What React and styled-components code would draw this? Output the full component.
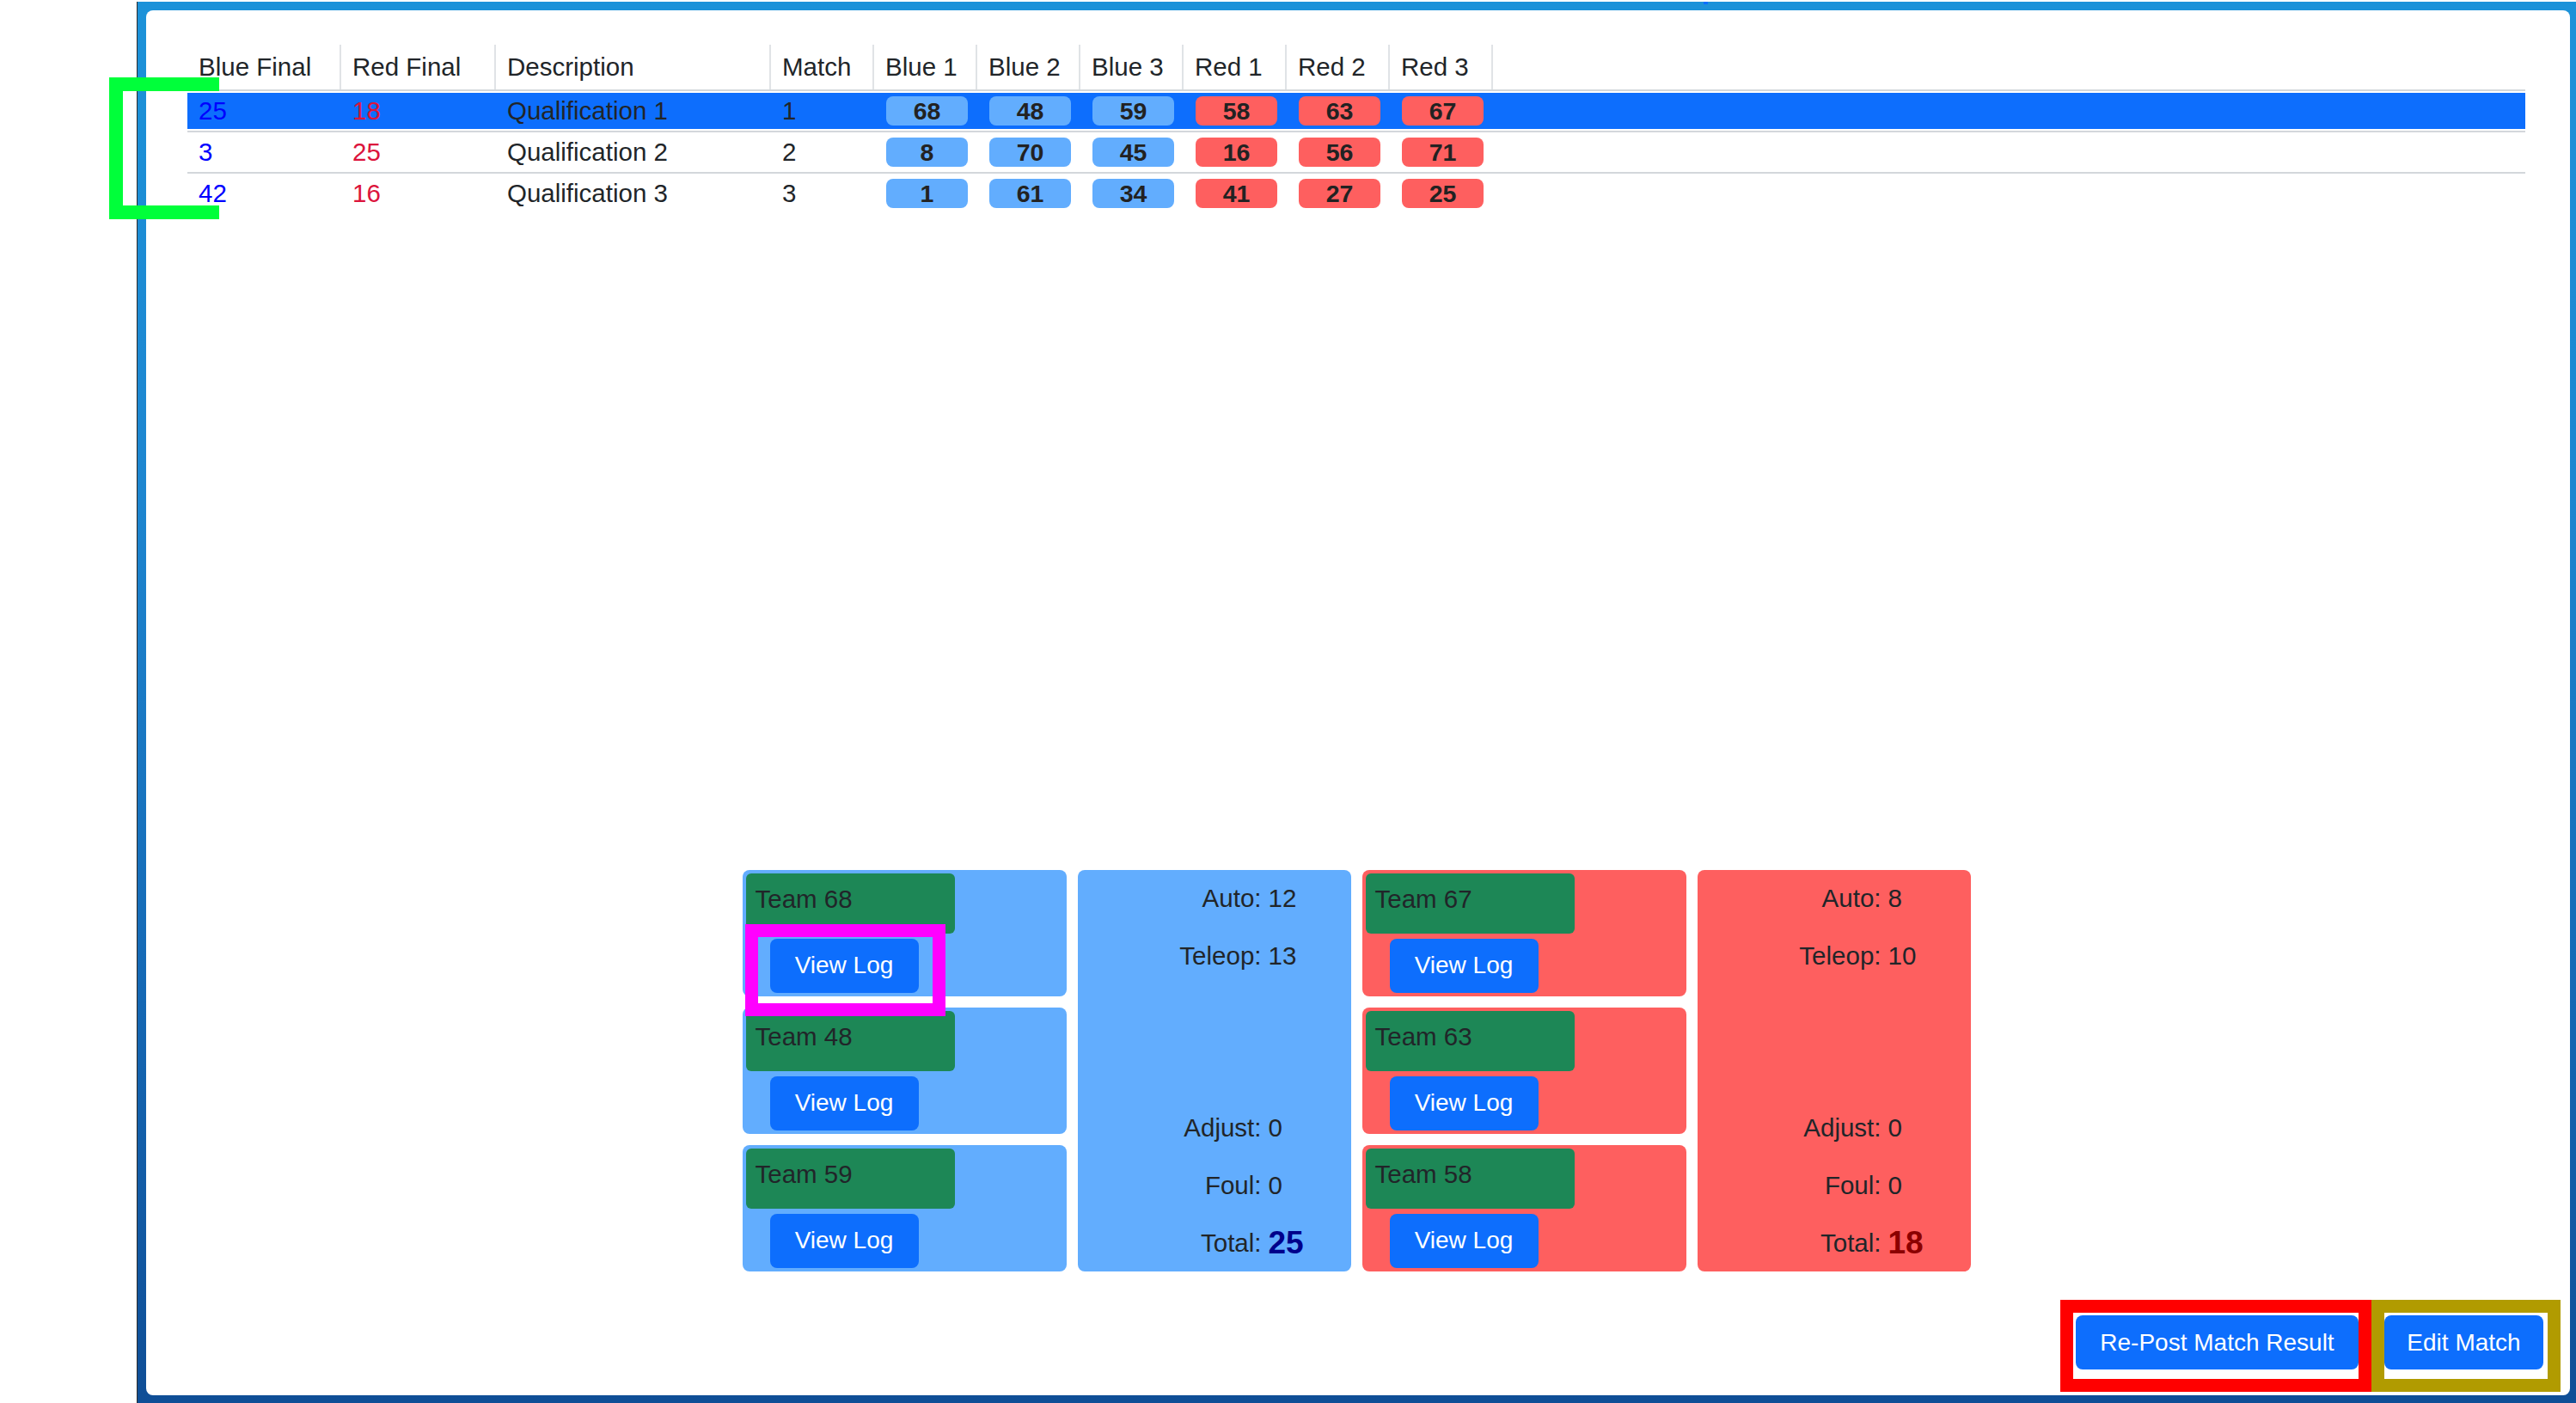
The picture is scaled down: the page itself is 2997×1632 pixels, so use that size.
import React from "react";
import styled, { createGlobalStyle } from "styled-components";

const blueSoft = "#62adfe";
const redSoft = "#fe5f5f";
const primary = "#0d6efd";
const ink = "#212529";
const line = "#d3d7db";

const GlobalStyle = createGlobalStyle`
  html, body {
    margin: 0;
    padding: 0;
    background: #fff;
  }
  body {
    font-family: "Liberation Sans", Arial, sans-serif;
    color: ${ink};
    overflow: hidden;
  }
`;

const Page = styled.div`
  position: relative;
  width: 2997px;
  height: 1632px;
`;

const Frame = styled.div`
  box-sizing: border-box;
  margin: 2px 0 0 159px;
  height: 1630px;
  border-left: 1px solid #2b2b2b;
  padding: 10px 7px 9px 10px;
  background: linear-gradient(180deg, #1c92d9 0%, #1d86d0 35%, #1569b5 70%, #0f4e96 100%);
`;

const Panel = styled.div`
  box-sizing: border-box;
  height: 100%;
  background: #fff;
  border-radius: 8px;
  padding: 40px 52px 30px 48px;
  display: flex;
  flex-direction: column;
`;

const cols = "179px 180px 320px 120px repeat(6, 120px) 1fr";

const HeadRow = styled.div`
  display: grid;
  grid-template-columns: ${cols};
  height: 52px;
  border-bottom: 2px solid ${line};
`;

const HeadCell = styled.div`
  display: flex;
  align-items: center;
  padding-left: 13px;
  font-size: 29.5px;
  border-right: ${({ last }) => (last ? "none" : "2px solid #e0e3e6")};
`;

const Row = styled.div`
  display: grid;
  grid-template-columns: ${cols};
  height: 46px;
  border-bottom: ${({ last }) => (last ? "none" : `2px solid ${line}`)};
  background: ${({ active }) => (active ? primary : "transparent")};
  box-shadow: ${({ active }) =>
    active ? "inset 0 2px 0 #fff, inset 0 -2px 0 #fff" : "none"};
`;

const Cell = styled.div`
  display: flex;
  align-items: center;
  padding-left: 13px;
  font-size: 29.5px;
  color: ${({ tone }) =>
    tone === "blue" ? "#0000ff" : tone === "red" ? "#dc143c" : ink};
`;

const Badge = styled.div`
  width: 95px;
  height: 34px;
  margin-left: 1px;
  border-radius: 8px;
  background: ${({ side }) => (side === "red" ? redSoft : blueSoft)};
  color: #222;
  font-weight: 700;
  font-size: 28.5px;
  display: flex;
  align-items: center;
  justify-content: center;
`;

const Board = styled.div`
  margin-top: auto;
  display: flex;
  justify-content: center;
  gap: 13px;
`;

const TeamColumn = styled.div`
  width: 377px;
  display: flex;
  flex-direction: column;
  gap: 13px;
`;

const TeamCard = styled.div`
  box-sizing: border-box;
  height: 147px;
  padding: 4px;
  border-radius: 8px;
  background: ${({ side }) => (side === "red" ? redSoft : blueSoft)};
  display: flex;
  flex-direction: column;
  align-items: flex-start;
`;

const TeamLabel = styled.div`
  box-sizing: border-box;
  width: 243px;
  height: 70px;
  padding: 12px 11px 0;
  border-radius: 6px;
  background: #1d8756;
  font-size: 29.5px;
  line-height: 36px;
  color: ${ink};
`;

const Button = styled.button`
  box-sizing: border-box;
  height: ${({ h }) => h || 64}px;
  width: ${({ w }) => w}px;
  border: none;
  border-radius: 8px;
  background: ${primary};
  color: #fff;
  font-family: "Liberation Sans", Arial, sans-serif;
  font-size: 28px;
  padding: 0;
  cursor: pointer;
`;

const LogButton = styled(Button)`
  margin: 6px 0 0 28px;
`;

const Summary = styled.div`
  box-sizing: border-box;
  width: 318px;
  border-radius: 8px;
  background: ${({ side }) => (side === "red" ? redSoft : blueSoft)};
  display: flex;
  flex-direction: column;
  justify-content: space-between;
`;

const StatGroup = styled.div`
  display: grid;
  grid-template-columns: 214px 1fr;
  grid-auto-rows: 66.7px;
  column-gap: 8px;
  align-items: center;
  font-size: 29.5px;
`;

const StatLabel = styled.div`
  text-align: right;
`;

const StatValue = styled.div`
  text-align: left;
  ${({ total, side }) =>
    total
      ? `font-weight: 700; font-size: 37px; color: ${
          side === "red" ? "#8b0000" : "#00008b"
        };`
      : ""}
`;

const Actions = styled.div`
  margin-top: 51px;
  display: flex;
  justify-content: flex-end;
  gap: 30px;
  padding-right: 31px;
  margin-right: -52px;
`;

const Mark = styled.div`
  position: absolute;
  box-sizing: border-box;
  pointer-events: none;
  border: ${({ t }) => t || 15}px solid ${({ color }) => color};
  ${({ open }) => (open ? "border-right: none;" : "")}
`;

const TopTick = styled.div`
  position: absolute;
  left: 1982px;
  top: 0;
  width: 5px;
  height: 3px;
  background: ${primary};
`;

const headers = [
  "Blue Final",
  "Red Final",
  "Description",
  "Match",
  "Blue 1",
  "Blue 2",
  "Blue 3",
  "Red 1",
  "Red 2",
  "Red 3",
];

const matches = [
  { blue: 25, red: 18, desc: "Qualification 1", n: 1, b: [68, 48, 59], r: [58, 63, 67] },
  { blue: 3, red: 25, desc: "Qualification 2", n: 2, b: [8, 70, 45], r: [16, 56, 71] },
  { blue: 42, red: 16, desc: "Qualification 3", n: 3, b: [1, 61, 34], r: [41, 27, 25] },
];

const alliances = [
  { side: "blue", teams: [68, 48, 59], auto: 12, teleop: 13, adjust: 0, foul: 0, total: 25 },
  { side: "red", teams: [67, 63, 58], auto: 8, teleop: 10, adjust: 0, foul: 0, total: 18 },
];

export default function App() {
  return (
    <Page>
      <GlobalStyle />
      <TopTick />
      <Frame>
        <Panel>
          <div>
            <HeadRow>
              {headers.map((h) => (
                <HeadCell key={h}>{h}</HeadCell>
              ))}
              <HeadCell last />
            </HeadRow>
            {matches.map((m, i) => (
              <Row key={m.n} active={i === 0} last={i === matches.length - 1}>
                <Cell tone="blue">{m.blue}</Cell>
                <Cell tone="red">{m.red}</Cell>
                <Cell>{m.desc}</Cell>
                <Cell>{m.n}</Cell>
                {m.b.map((t, k) => (
                  <Cell key={`b${k}`}>
                    <Badge side="blue">{t}</Badge>
                  </Cell>
                ))}
                {m.r.map((t, k) => (
                  <Cell key={`r${k}`}>
                    <Badge side="red">{t}</Badge>
                  </Cell>
                ))}
                <Cell />
              </Row>
            ))}
          </div>

          <Board>
            {alliances.map((a) => (
              <React.Fragment key={a.side}>
                <TeamColumn>
                  {a.teams.map((t) => (
                    <TeamCard key={t} side={a.side}>
                      <TeamLabel>Team {t}</TeamLabel>
                      <LogButton w={173}>View Log</LogButton>
                    </TeamCard>
                  ))}
                </TeamColumn>
                <Summary side={a.side}>
                  <StatGroup>
                    <StatLabel>Auto:</StatLabel>
                    <StatValue>{a.auto}</StatValue>
                    <StatLabel>Teleop:</StatLabel>
                    <StatValue>{a.teleop}</StatValue>
                  </StatGroup>
                  <StatGroup>
                    <StatLabel>Adjust:</StatLabel>
                    <StatValue>{a.adjust}</StatValue>
                    <StatLabel>Foul:</StatLabel>
                    <StatValue>{a.foul}</StatValue>
                    <StatLabel>Total:</StatLabel>
                    <StatValue total side={a.side}>
                      {a.total}
                    </StatValue>
                  </StatGroup>
                </Summary>
              </React.Fragment>
            ))}
          </Board>

          <Actions>
            <Button w={329} h={63}>Re-Post Match Result</Button>
            <Button w={185} h={63}>Edit Match</Button>
          </Actions>
        </Panel>
      </Frame>

      <Mark color="#00ff3a" t={16} open style={{ left: 127, top: 88, width: 128, height: 165 }} />
      <Mark color="#ff00ff" style={{ left: 867, top: 1073, width: 233, height: 107 }} />
      <Mark color="#ff0000" style={{ left: 2397, top: 1510, width: 362, height: 107 }} />
      <Mark color="#b19b00" style={{ left: 2759, top: 1510, width: 220, height: 107 }} />
    </Page>
  );
}
